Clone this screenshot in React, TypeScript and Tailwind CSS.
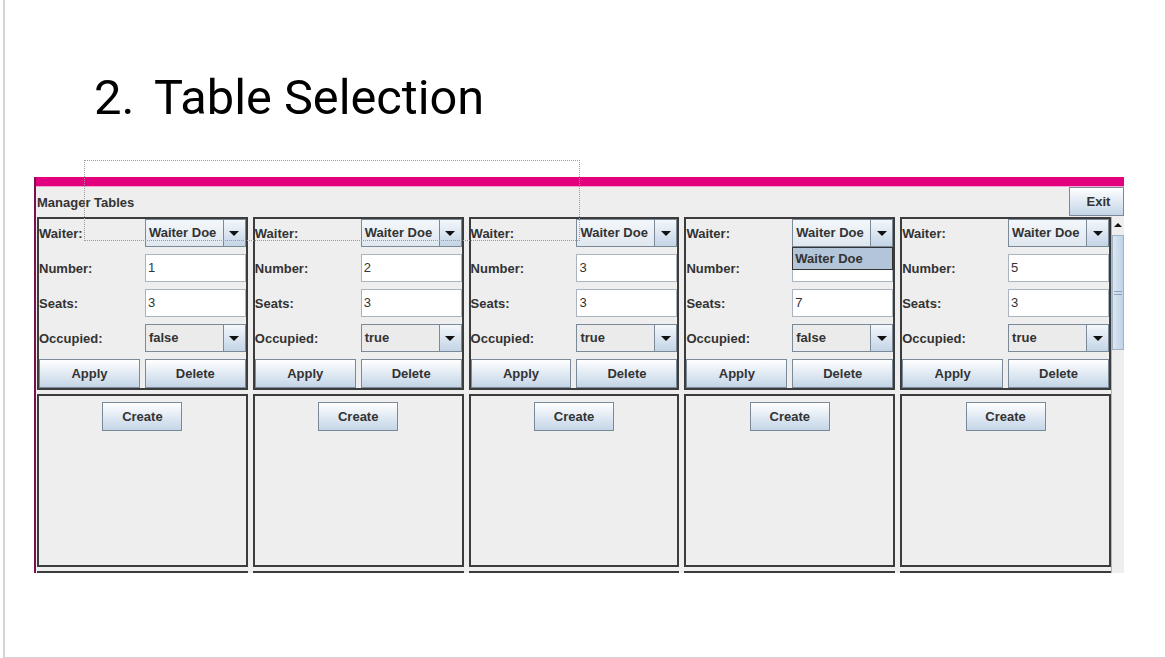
const tables = [
  { number: "1", seats: "3", occupied: "false", open: false },
  { number: "2", seats: "3", occupied: "true", open: false },
  { number: "3", seats: "3", occupied: "true", open: false },
  { number: "", seats: "7", occupied: "false", open: true },
  { number: "5", seats: "3", occupied: "true", open: false },
];

const swing = { fontFamily: '"Liberation Sans", Arial, sans-serif' };

const Arrow = () => (
  <svg width="10" height="5" viewBox="0 0 10 5">
    <path d="M0 0 H10 L5 5 Z" fill="#111" />
  </svg>
);

const Combo = ({ value, flat }: { value: string; flat?: boolean }) => (
  <div className="flex h-[28px] border border-[#7a8a99]">
    <div
      className={`flex-1 flex items-center px-[3px] text-[13px] font-bold text-[#333] ${
        flat ? "bg-[#ebebeb]" : "bg-linear-to-b from-[#f4f7fa] to-[#dfe7ef]"
      }`}
    >
      {value}
    </div>
    <div className="w-[22px] border-l border-[#7a8a99] bg-linear-to-b from-[#f4f7fb] to-[#c3d4e6] flex items-center justify-center">
      <Arrow />
    </div>
  </div>
);

const Field = ({ value }: { value: string }) => (
  <div className="h-[28px] border border-[#a9b4c0] bg-white flex items-center px-[2px] text-[13px] text-[#333]">
    {value}
  </div>
);

const Btn = ({ label, className = "" }: { label: string; className?: string }) => (
  <div
    className={`h-[29px] border border-[#7a8a99] bg-linear-to-b from-white to-[#c4d5e7] flex items-center justify-center text-[13px] font-bold text-[#333] ${className}`}
  >
    {label}
  </div>
);

const Label = ({ text }: { text: string }) => (
  <div className="h-[28px] flex items-center pt-[2px] text-[13px] font-bold text-[#333]">{text}</div>
);

const TablePanel = ({ t }: { t: (typeof tables)[number] }) => (
  <div className="h-[173px] border-2 border-[#3c3c3c] bg-[#eeeeee] grid grid-cols-2 gap-x-[5px] gap-y-[7px] content-start">
    <Label text="Waiter:" />
    <div className="relative">
      <Combo value="Waiter Doe" />
      {t.open && (
        <div className="absolute left-0 top-full w-full h-[23px] border border-[#333] bg-[#b3c5d9] px-[2px] text-[13px] font-bold text-[#333] leading-[21px] z-10">
          Waiter Doe
        </div>
      )}
    </div>
    <Label text="Number:" />
    <Field value={t.number} />
    <Label text="Seats:" />
    <Field value={t.seats} />
    <Label text="Occupied:" />
    <Combo value={t.occupied} flat />
    <Btn label="Apply" />
    <Btn label="Delete" />
  </div>
);

const CreatePanel = ({ empty }: { empty?: boolean }) => (
  <div className="h-[173px] border-2 border-[#3c3c3c] bg-[#eeeeee] flex justify-center pt-[6px]">
    {!empty && <Btn label="Create" className="w-[80px]" />}
  </div>
);

export default function App() {
  return (
    <div className="relative w-[1165px] h-[658px] bg-white overflow-hidden">
      <div className="ml-[3px] h-[658px] border-l-2 border-b border-[#d4d4d4]">
        {/* slide title */}
        <div className="h-[177px] pl-[89px] pt-[70px] flex items-start" style={{ fontFamily: "Roboto, sans-serif" }}>
          <span className="w-[60px] text-[49px] leading-[56px] text-black">2.</span>
          <span className="text-[48.7px] leading-[56px] text-black">Table Selection</span>
        </div>

        {/* swing window screenshot */}
        <div className="ml-[29px] w-[1090px] h-[396px] overflow-hidden border-l-2 border-[#7a1050] bg-[#eeeeee]" style={swing}>
          <div className="h-[10px] bg-[#e3007f] border-b border-[#f3a6cf]" />
          <div className="h-[30px] flex items-start justify-between pl-[1px]">
            <div className="h-[30px] flex items-center pt-[1px] text-[13px] font-bold text-[#333]">Manager Tables</div>
            <Btn label="Exit" className="w-[55px] h-[28px] pl-[4px]" />
          </div>
          <div className="flex">
            <div className="w-[1075px] pl-[1px] grid grid-cols-5 gap-x-[5px] gap-y-[4px]">
              {tables.map((t, i) => (
                <TablePanel key={"t" + i} t={t} />
              ))}
              {tables.map((_, i) => (
                <CreatePanel key={"c" + i} />
              ))}
              {tables.map((_, i) => (
                <CreatePanel key={"d" + i} empty />
              ))}
            </div>
            {/* scrollbar */}
            <div className="w-[13px] h-[360px] border-l border-[#a8b8c8] bg-[#eeeeee] flex flex-col">
              <div className="h-[15px] flex items-center justify-center">
                <svg width="8" height="4" viewBox="0 0 8 4">
                  <path d="M0 4 H8 L4 0 Z" fill="#111" />
                </svg>
              </div>
              <div className="mt-[3px] h-[115px] border border-[#a0b4c8] bg-linear-to-r from-[#dce7f2] to-[#bfd2e6] flex flex-col items-center justify-center gap-[2px]">
                <div className="w-[8px] h-px bg-[#8aa2bb]" />
                <div className="w-[8px] h-px bg-[#8aa2bb]" />
              </div>
            </div>
          </div>
        </div>
      </div>

      {/* dotted selection outline over the slide */}
      <div className="absolute left-[84px] top-[160px] w-[496px] h-[81px] border border-dotted border-[#9a9a9a] pointer-events-none" />
    </div>
  );
}
